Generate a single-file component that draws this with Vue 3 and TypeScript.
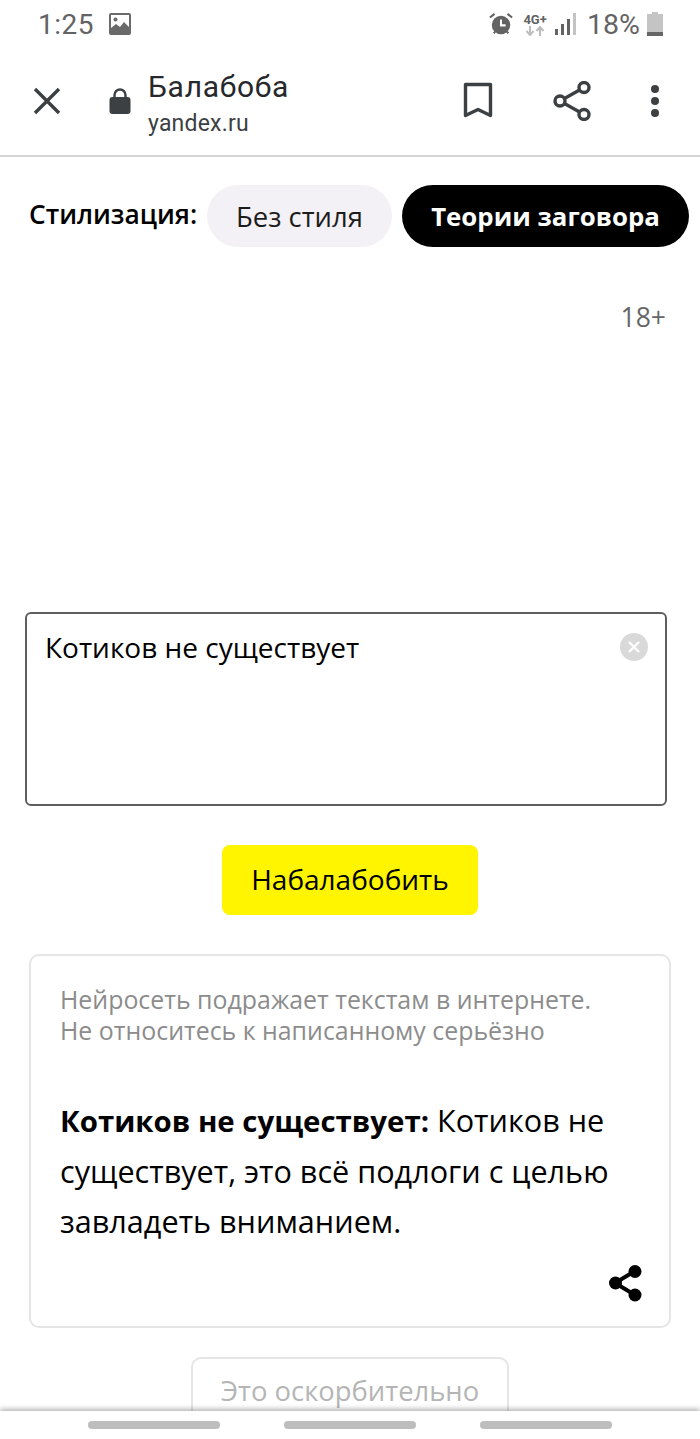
<script setup lang="ts">
const barSegments = [6, 11, 16, 22];
</script>

<template>
  <div class="phone">
    <div class="status">
      <div class="status-left">
        <span class="time">1:25</span>
        <svg class="pic" width="24" height="24" viewBox="0 0 24 24">
          <rect x="1" y="1" width="22" height="22" rx="2" fill="#6a6a6a" />
          <rect x="3" y="3" width="18" height="16" fill="#fff" />
          <circle cx="7.500" cy="7.500" r="2" fill="#6a6a6a" />
          <path d="M3 19v-3l5-4 4 3 4-5 5 5v4z" fill="#6a6a6a" />
        </svg>
      </div>
      <div class="status-right">
        <svg width="24" height="24" viewBox="0 0 26 26">
          <circle cx="13" cy="14" r="10" fill="#636363" />
          <path d="M13 8v6.500h5" fill="none" stroke="#fff" stroke-width="2.200" />
          <path d="M1 6l5-4M25 6l-5-4M5 23l2-2M21 23l-2-2" stroke="#636363" stroke-width="2.200" />
        </svg>
        <div class="net">
          <span class="net-label">4G+</span>
          <svg width="20" height="10" viewBox="0 0 20 10">
            <path d="M5 0v8M1.500 5l3.500 4 3.500-4" fill="none" stroke="#bdbdbd" stroke-width="2" />
            <path d="M15 10V2M11.500 5L15 1l3.500 4" fill="none" stroke="#bdbdbd" stroke-width="2" />
          </svg>
        </div>
        <div class="bars">
          <i v-for="(h, n) in barSegments" :key="h" :class="{ off: n === 3 }" :style="{ height: h + 'px' }"></i>
        </div>
        <span class="pct">18%</span>
        <svg width="16" height="24" viewBox="0 0 16 24">
          <path d="M5 0h6v2h5v22H0V2h5z" fill="#c4c4c4" />
          <rect y="20" width="16" height="4" fill="#666" />
        </svg>
      </div>
    </div>

    <header class="toolbar">
      <svg class="close" width="30" height="30" viewBox="0 0 30 30">
        <path d="M3 3l24 24M27 3L3 27" stroke="#3c4043" stroke-width="3.400" />
      </svg>
      <svg class="lock" width="22" height="28" viewBox="0 0 22 28">
        <path d="M5.500 12V8a5.500 5.500 0 0 1 11 0v4" fill="none" stroke="#3c4043" stroke-width="2.400" />
        <rect x="0.500" y="10" width="21" height="17" rx="3" fill="#3c4043" />
      </svg>
      <div class="site">
        <div class="site-title">Балабоба</div>
        <div class="site-url">yandex.ru</div>
      </div>
      <svg class="bookmark" width="30" height="38" viewBox="0 0 30 38">
        <path d="M2.500 2.500h25v31L15 27.500 2.500 33.500z" fill="none" stroke="#3c4043" stroke-width="3.400" stroke-linejoin="round" />
      </svg>
      <svg class="share" width="38" height="40" viewBox="0 0 38 40">
        <path d="M7 20L31 6.500M7 20l24 13.500" stroke="#3c4043" stroke-width="3.400" />
        <circle cx="7" cy="20" r="5" fill="#fff" stroke="#3c4043" stroke-width="3.400" />
        <circle cx="31" cy="6.500" r="5" fill="#fff" stroke="#3c4043" stroke-width="3.400" />
        <circle cx="31" cy="33.500" r="5" fill="#fff" stroke="#3c4043" stroke-width="3.400" />
      </svg>
      <div class="dots"><i></i><i></i><i></i></div>
    </header>

    <main class="content">
      <div class="styles">
        <span class="styles-label">Стилизация:</span>
        <button class="pill">Без стиля</button>
        <button class="pill active">Теории заговора</button>
      </div>
      <div class="age">18+</div>

      <div class="input-box">
        <span class="input-text">Котиков не существует</span>
        <span class="clear">
          <svg width="14" height="14" viewBox="0 0 14 14">
            <path d="M2 2l10 10M12 2L2 12" stroke="#fff" stroke-width="2.400" />
          </svg>
        </span>
      </div>

      <div class="action"><button class="go">Набалабобить</button></div>

      <section class="card">
        <p class="note">Нейросеть подражает текстам в интернете.<br />Не относитесь к написанному серьёзно</p>
        <p class="result"><b>Котиков не существует:</b> Котиков не существует, это всё подлоги с целью завладеть вниманием.</p>
        <svg class="card-share" width="36" height="38" viewBox="0 0 36 38">
          <path d="M7 19L27 7M7 19l20 12" stroke="#000" stroke-width="4" />
          <circle cx="7.500" cy="19" r="6.500" />
          <circle cx="27" cy="7.500" r="6.500" />
          <circle cx="27" cy="31" r="6.500" />
        </svg>
      </section>

      <div class="action"><button class="report">Это оскорбительно</button></div>
    </main>

    <nav class="navbar"><i></i><i></i><i></i></nav>
  </div>
</template>

<style>
html, body { margin: 0; background: #fff; }
</style>

<style scoped>
.phone {
  width: 700px;
  height: 1439px;
  display: flex;
  flex-direction: column;
  overflow: hidden;
  background: #fff;
  font-family: "Open Sans", "Noto Sans", sans-serif;
}

.status {
  height: 48px;
  flex: none;
  display: flex;
  align-items: center;
  justify-content: space-between;
  padding: 0 37px 0 38px;
  font-family: Roboto, sans-serif;
  color: #636363;
}

.status-left, .status-right { display: flex; align-items: center; }
.time { font-size: 28px; letter-spacing: 0.5px; }
.pic { margin-left: 14px; }
.status-right svg { display: block; }
.net { margin-left: 10px; width: 24px; display: flex; flex-direction: column; align-items: center; }
.net-label { font-size: 13px; font-weight: 700; line-height: 13px; white-space: nowrap; }
.bars { display: flex; align-items: flex-end; gap: 3px; margin-left: 8px; height: 22px; }
.bars i { width: 3px; background: #636363; }
.bars i.off { background: #c4c4c4; }
.pct { font-size: 28.5px; margin: 0 7px 0 11px; }

.toolbar {
  height: 109px;
  flex: none;
  box-sizing: border-box;
  display: flex;
  align-items: center;
  padding: 0 0 2px 32px;
  border-bottom: 2px solid #d5d5d5;
}

.lock { margin: 0 0 0 47px; }
.site { margin: 5px 0 0 17px; width: 315px; font-family: Roboto, sans-serif; }
.site-title { font-size: 30px; line-height: 36px; color: #26282b; letter-spacing: 0.7px; }
.site-url { margin-top: 5px; font-size: 23px; line-height: 28px; color: #3c4043; letter-spacing: 0.2px; }
.share { margin-left: 60px; }
.dots { margin-left: 60px; display: flex; flex-direction: column; gap: 4px; }
.dots i { width: 8px; height: 8px; border-radius: 50%; background: #3c4043; }

.content { flex: 1; min-height: 0; overflow: hidden; }

.styles { display: flex; align-items: center; padding: 28px 0 0 29px; }
.styles-label { font-size: 26.3px; font-weight: 600; color: #000; width: 178px; white-space: nowrap; padding-bottom: 4px; }
.pill {
  height: 62px;
  padding: 0;
  width: 185px;
  border: 0;
  border-radius: 31px;
  background: #f3f1f5;
  color: #1c1c1c;
  font: 400 27.4px "Open Sans", sans-serif;
  white-space: nowrap;
}
.pill.active {
  width: 287px;
  margin-left: 10px;
  background: #000;
  color: #fff;
  font-size: 25.8px;
  font-weight: 700;
}

.age { margin: 52px 34px 0 0; text-align: right; font-size: 26.5px; line-height: 36px; color: #666; }

.input-box {
  margin: 277px 0 0 25px;
  width: 642px;
  height: 194px;
  box-sizing: border-box;
  border: 2px solid #5f5f5f;
  border-radius: 6px;
  display: flex;
  justify-content: space-between;
  padding: 14px 17px 0 18px;
}
.input-text { font-size: 28px; line-height: 38px; color: #000; }
.clear {
  margin-top: 5px;
  width: 28px;
  height: 28px;
  border-radius: 50%;
  background: #d9d9d9;
  display: flex;
  align-items: center;
  justify-content: center;
}

.action { display: flex; justify-content: center; }
.go {
  margin-top: 39px;
  width: 256px;
  height: 70px;
  border: 0;
  border-radius: 8px;
  background: #fff500;
  color: #000;
  font: 400 28px "Open Sans", sans-serif;
  padding: 0 0 2px;
}

.card {
  position: relative;
  margin: 39px 0 0 29px;
  width: 642px;
  height: 374px;
  box-sizing: border-box;
  border: 2px solid #e5e5e5;
  border-radius: 10px;
  padding: 28px 29px 0;
}
.note { margin: 0; font-size: 24.9px; line-height: 31px; color: #8c8c8c; }
.result { margin: 49px 0 0; font-size: 30.6px; line-height: 50px; color: #000; }
.result b { font-size: 29.4px; font-weight: 700; }
.card-share { position: absolute; right: 25px; bottom: 24px; }

.report {
  margin-top: 29px;
  width: 318px;
  height: 70px;
  border: 2px solid #e5e5e5;
  border-radius: 10px;
  background: #fff;
  color: #b5b5b5;
  font: 400 27.4px "Open Sans", sans-serif;
  padding: 0 0 4px;
  white-space: nowrap;
}

.navbar {
  position: relative;
  height: 28px;
  flex: none;
  display: flex;
  justify-content: center;
  gap: 64px;
  padding-top: 10px;
  box-sizing: border-box;
  background: #fff;
  box-shadow: 0 -2px 5px rgba(0, 0, 0, 0.3);
}
.navbar i { width: 132px; height: 8px; border-radius: 4px; background: #bdbdbd; }
</style>
